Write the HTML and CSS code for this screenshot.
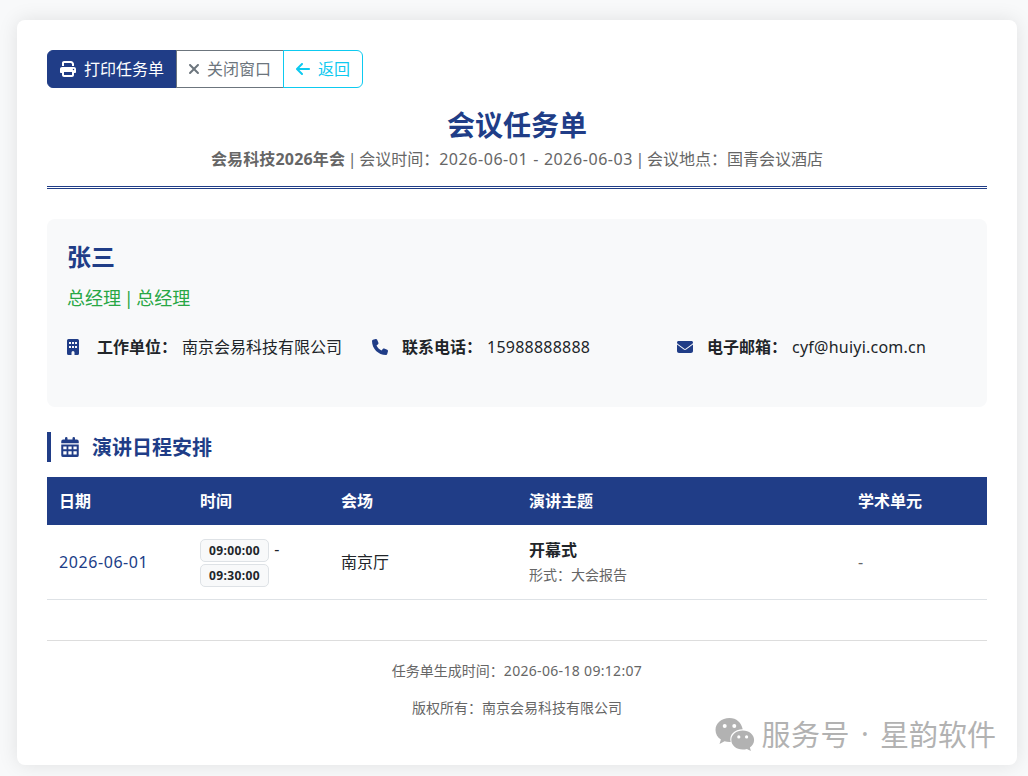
FILE: index.html
```html
<!DOCTYPE html>
<html lang="zh-CN">
<head>
    <meta charset="UTF-8">
    <meta name="viewport" content="width=device-width, initial-scale=1.0">
    <title>会议任务单</title>
    <link rel="stylesheet" href="styles.css">
</head>
<body>
    <div class="task-container">
        <div class="btn-group">
            <button class="btn btn-print">
                <svg class="icon" width="16" height="16" viewBox="0 0 512 512"><path d="M128 0C92.700 0 64 28.700 64 64v96h64V64H354.700L384 93.300V160h64V93.300c0-17-6.700-33.300-18.700-45.300L400 18.700C388 6.700 371.700 0 354.700 0H128zM384 352v96H128V352H384zm64 32h32c17.700 0 32-14.300 32-32V256c0-35.300-28.700-64-64-64H64c-35.300 0-64 28.700-64 64v96c0 17.700 14.300 32 32 32H64v64c0 35.300 28.700 64 64 64H384c35.300 0 64-28.700 64-64V384zM432 248a24 24 0 1 1 0 48 24 24 0 1 1 0-48z"/></svg>
                <span>打印任务单</span>
            </button>
            <button class="btn btn-close">
                <svg class="icon" width="12" height="16" viewBox="0 0 384 512"><path d="M342.600 150.600c12.500-12.500 12.500-32.800 0-45.300s-32.800-12.500-45.300 0L192 210.700 86.600 105.400c-12.500-12.500-32.800-12.500-45.300 0s-12.500 32.800 0 45.300L146.700 256 41.400 361.400c-12.500 12.500-12.500 32.800 0 45.300s32.800 12.500 45.300 0L192 301.300 297.400 406.600c12.500 12.500 32.800 12.500 45.300 0s12.500-32.800 0-45.300L237.300 256 342.600 150.600z"/></svg>
                <span>关闭窗口</span>
            </button>
            <button class="btn btn-back">
                <svg class="icon" width="14" height="16" viewBox="0 0 448 512"><path d="M9.400 233.400c-12.500 12.500-12.500 32.800 0 45.300l160 160c12.500 12.500 32.800 12.500 45.300 0s12.500-32.800 0-45.300L109.200 288 416 288c17.700 0 32-14.300 32-32s-14.300-32-32-32l-306.700 0L214.600 118.600c12.500-12.500 12.500-32.800 0-45.300s-32.800-12.500-45.300 0l-160 160z"/></svg>
                <span>返回</span>
            </button>
        </div>

        <div class="header">
            <h1>会议任务单</h1>
            <p><strong>会易科技2026年会</strong> | 会议时间：<span class="date-range">2026-06-01 - 2026-06-03</span> | 会议地点：国青会议酒店</p>
        </div>

        <div class="speaker-info">
            <h2 class="speaker-name">张三</h2>
            <div class="speaker-title">总经理 | 总经理</div>
            <div class="info-row">
                <div class="info-item">
                    <span class="info-icon"><svg class="icon" width="12" height="16" viewBox="0 0 384 512"><path fill-rule="evenodd" d="M48 0h288a48 48 0 0 1 48 48v416a48 48 0 0 1-48 48h-96v-80a48 48 0 0 0-96 0v80H48a48 48 0 0 1-48-48V48A48 48 0 0 1 48 0zM64 96v64h64V96zM160 96v64h64V96zM256 96v64h64V96zM64 224v64h64v-64zM160 224v64h64v-64zM256 224v64h64v-64z"/></svg></span>
                    <strong>工作单位：</strong>
                    <span>南京会易科技有限公司</span>
                </div>
                <div class="info-item">
                    <span class="info-icon"><svg class="icon" width="16" height="16" viewBox="0 0 512 512"><path d="M164.900 24.600c-7.700-18.600-28-28.500-47.400-23.200l-88 24C12.100 30.200 0 46 0 64C0 311.400 200.600 512 448 512c18 0 33.800-12.100 38.600-29.500l24-88c5.300-19.400-4.600-39.700-23.200-47.400l-96-40c-16.300-6.800-35.200-2.100-46.300 11.600L304.700 368C234.300 334.700 177.300 277.700 144 207.300L193.300 167c13.700-11.200 18.400-30 11.600-46.300l-40-96z"/></svg></span>
                    <strong>联系电话：</strong>
                    <span class="latin">15988888888</span>
                </div>
                <div class="info-item">
                    <span class="info-icon"><svg class="icon" width="16" height="16" viewBox="0 0 512 512"><path d="M48 64C21.500 64 0 85.500 0 112c0 15.100 7.100 29.300 19.200 38.400L236.800 313.600c11.400 8.500 27 8.500 38.400 0L492.800 150.400c12.100-9.100 19.200-23.300 19.200-38.400c0-26.500-21.500-48-48-48H48zM0 176V384c0 35.300 28.700 64 64 64H448c35.300 0 64-28.700 64-64V176L294.400 339.200c-22.800 17.100-54 17.100-76.800 0L0 176z"/></svg></span>
                    <strong>电子邮箱：</strong>
                    <span class="latin">cyf@huiyi.com.cn</span>
                </div>
            </div>
        </div>

        <h3 class="section-title">
            <svg class="icon" width="18" height="20" viewBox="0 0 448 512"><path fill-rule="evenodd" d="M96 32a32 32 0 0 1 64 0v32h128V32a32 32 0 0 1 64 0v32h48a48 48 0 0 1 48 48v48H0v-48a48 48 0 0 1 48-48h48zM0 192h448v272a48 48 0 0 1-48 48H48a48 48 0 0 1-48-48zM52 240v72h84v-72zM182 240v72h84v-72zM312 240v72h84v-72zM52 364v84h84v-84zM182 364v84h84v-84zM312 364v84h84v-84z"/></svg>
            <span>演讲日程安排</span>
        </h3>

        <table class="schedule-table">
            <thead>
                <tr>
                    <th class="col-date">日期</th>
                    <th class="col-time">时间</th>
                    <th class="col-room">会场</th>
                    <th class="col-topic">演讲主题</th>
                    <th class="col-unit">学术单元</th>
                </tr>
            </thead>
            <tbody>
                <tr>
                    <td class="date">2026-06-01</td>
                    <td class="time"><span class="badge">09:00:00</span> -<br><span class="badge">09:30:00</span></td>
                    <td>南京厅</td>
                    <td>
                        <div class="topic">开幕式</div>
                        <div class="topic-type">形式：大会报告</div>
                    </td>
                    <td class="muted">-</td>
                </tr>
            </tbody>
        </table>

        <div class="footer">
            <p>任务单生成时间：<span class="stamp">2026-06-18 09:12:07</span></p>
            <p>版权所有：南京会易科技有限公司</p>
        </div>

        <div class="watermark">
            <svg width="40" height="34" viewBox="0 0 40 34">
                <path fill="#b2b2b2" fill-rule="evenodd" d="M14.500 0C6.500 0 .5 5.200.5 12c0 4 2 7.300 5.400 9.500L4.500 26l5-2.700c1.600.5 3.300.7 5.200.7h1C13.700 17 19.500 11.300 27.700 11.300C26.500 4.800 21.500 0 14.500 0zM9.700 6a2 2 0 1 1 0 4 2 2 0 0 1 0-4zM19.300 6a2 2 0 1 1 0 4 2 2 0 0 1 0-4z"/>
                <path fill="#b2b2b2" fill-rule="evenodd" d="M27.700 12.500c-6.500 0-11.400 4.200-11.400 9.500s4.900 9.500 11.400 9.500c1.500 0 2.900-.2 4.200-.6l4 2.100-1-3.500c2.500-1.800 4.200-4.400 4.200-7.500 0-5.300-4.900-9.500-11.400-9.500zM23.800 17.300a1.600 1.600 0 1 1 0 3.200 1.600 1.600 0 0 1 0-3.200zM31.600 17.300a1.600 1.600 0 1 1 0 3.200 1.600 1.600 0 0 1 0-3.200z"/>
            </svg>
            <span class="account">服务号</span>
            <span class="dot">·</span>
            <span>星韵软件</span>
        </div>
    </div>
</body>
</html>
```
FILE: styles.css
```css
* {
    margin: 0;
    padding: 0;
    box-sizing: border-box;
}

body {
    padding: 20px 11px 11px 17px;
    background: #f8f9fa;
    color: #212529;
    font-family: "Noto Sans", "Noto Sans CJK SC", sans-serif;
    font-size: 16px;
    line-height: 24px;
    overflow: hidden;
}

.task-container {
    position: relative;
    width: 1000px;
    height: 745px;
    padding: 30px;
    background: #fff;
    border-radius: 8px;
    box-shadow: 0 0 20px rgba(0, 0, 0, 0.1);
}

.icon {
    display: block;
    fill: currentColor;
    flex: none;
}

/* Buttons */
.btn-group {
    display: flex;
}

.btn {
    display: flex;
    align-items: center;
    gap: 8px;
    height: 38px;
    padding: 0 12px;
    border: 1px solid;
    background: #fff;
    font: inherit;
    cursor: pointer;
}

.btn + .btn {
    margin-left: -1px;
}

.btn-print {
    width: 130px;
    background: #203d87;
    border-color: #203d87;
    border-radius: 6px 0 0 6px;
    color: #fff;
}

.btn-close {
    width: 108px;
    padding: 0 11px;
    gap: 7px;
    color: #6c757d;
}

.btn-back {
    width: 80px;
    border-radius: 0 6px 6px 0;
    color: #0dcaf0;
}

/* Header */
.header {
    margin-top: 20px;
    padding-bottom: 15px;
    border-bottom: 3px double #203d87;
    text-align: center;
}

.header h1 {
    color: #203d87;
    font-size: 28px;
    line-height: 34px;
    margin-bottom: 5px;
}

.header p {
    color: #666;
    word-spacing: -1.5px;
}

.header strong {
    letter-spacing: 0.15px;
}

.date-range {
    letter-spacing: 0.55px;
    word-spacing: 0.3px;
}

/* Speaker */
.speaker-info {
    height: 188px;
    margin-top: 30px;
    padding: 20px;
    background: #f8f9fa;
    border-radius: 8px;
}

.speaker-name {
    color: #203d87;
    font-size: 24px;
    line-height: 36px;
    margin-bottom: 10px;
}

.speaker-title {
    color: #28a745;
    font-size: 18px;
    line-height: 27px;
    margin-bottom: 23px;
    word-spacing: -2px;
}

.info-row {
    display: grid;
    grid-template-columns: 305px 305px 1fr;
}

.info-item {
    display: flex;
    align-items: center;
}

.info-icon {
    width: 30px;
    color: #203d87;
}

.info-item strong {
    margin-right: 5px;
}

.latin {
    letter-spacing: 0.23px;
}

/* Schedule */
.section-title {
    display: flex;
    align-items: center;
    gap: 13px;
    height: 30px;
    margin: 25px 0 15px;
    padding-left: 10px;
    border-left: 4px solid #203d87;
    color: #203d87;
    font-size: 20px;
}

.section-title span {
    padding-top: 2px;
}

.schedule-table {
    width: 100%;
    table-layout: fixed;
    border-collapse: separate;
    border-spacing: 0;
}

.schedule-table th {
    height: 48px;
    padding: 0 12px;
    background: #203d87;
    color: #fff;
    text-align: left;
}

.schedule-table td {
    height: 75px;
    padding: 0 12px;
    border-bottom: 1px solid #dee2e6;
    vertical-align: middle;
}

.col-date,
.col-time,
.col-unit {
    width: 15%;
}

.col-room {
    width: 20%;
}

.col-topic {
    width: 35%;
}

.schedule-table .date {
    color: #203d87;
    letter-spacing: 0.58px;
}

.schedule-table .time {
    line-height: 25px;
    word-spacing: 1px;
}

.badge {
    display: inline-block;
    width: 69px;
    height: 23px;
    border: 1px solid #dee2e6;
    border-radius: 5px;
    background: #f8f9fa;
    font-size: 12px;
    font-weight: bold;
    letter-spacing: 0.4px;
    line-height: 21px;
    text-align: center;
    vertical-align: middle;
}

.topic {
    font-weight: bold;
}

.topic-type {
    font-size: 14px;
    line-height: 25px;
    color: #666;
}

.muted {
    color: #666;
}

/* Footer */
.footer {
    margin-top: 40px;
    padding-top: 19px;
    border-top: 1px solid #ddd;
    color: #666;
    font-size: 14px;
    line-height: 21px;
    text-align: center;
}

.footer p + p {
    margin-top: 16px;
}

.stamp {
    letter-spacing: 0.32px;
}

.watermark {
    position: absolute;
    right: 21px;
    bottom: 10px;
    display: flex;
    align-items: center;
    color: #b2b2b2;
    font-family: "Noto Sans CJK SC", sans-serif;
    font-size: 29px;
    line-height: 44px;
}

.watermark svg {
    margin: 3px 6px 0 0;
}

.watermark .account {
    letter-spacing: 0.5px;
}

.watermark .dot {
    width: 30px;
    font-family: "Noto Sans", sans-serif;
    text-align: center;
}
```
